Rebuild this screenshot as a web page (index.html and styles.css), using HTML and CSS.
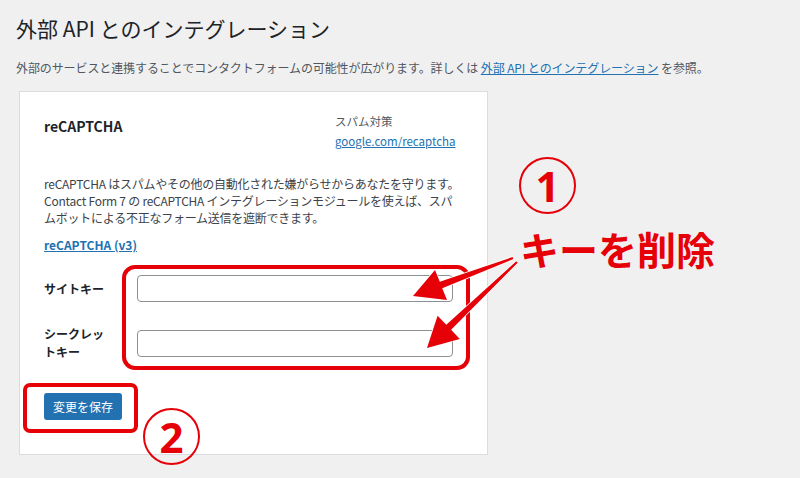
FILE: index.html
```html
<!DOCTYPE html>
<html lang="ja">
<head>
    <meta charset="UTF-8">
    <meta name="viewport" content="width=device-width, initial-scale=1.0">
    <title>外部 API とのインテグレーション</title>
    <link rel="stylesheet" href="styles.css">
</head>
<body>
    <div class="page">
        <h1 class="title">外部 API とのインテグレーション</h1>
        <p class="lead">外部のサービスと連携することでコンタクトフォームの可能性が広がります。詳しくは <a href="#">外部 API とのインテグレーション</a> を参照。</p>

        <div class="card">
            <div class="card-head">
                <h2 class="card-title">reCAPTCHA</h2>
                <div class="card-meta">
                    <span>スパム対策</span>
                    <a href="#">google.com/recaptcha</a>
                </div>
            </div>
            <p class="card-desc">reCAPTCHA はスパムやその他の自動化された嫌がらせからあなたを守ります。<br>Contact Form 7 の reCAPTCHA インテグレーションモジュールを使えば、スパ<br>ムボットによる不正なフォーム送信を遮断できます。</p>
            <p class="card-link"><a href="#">reCAPTCHA (v3)</a></p>
            <div class="keys">
                <label class="key-label" for="sitekey">サイトキー</label>
                <input class="key-input" type="text" id="sitekey">
                <label class="key-label" for="secret">シークレッ<br>トキー</label>
                <input class="key-input" type="text" id="secret">
            </div>
            <button class="save-button">変更を保存</button>
        </div>

        <!-- 注釈 -->
        <div class="notes">
            <div class="mark mark-keys"></div>
            <div class="mark mark-save"></div>
            <div class="num num-one">1</div>
            <div class="num num-two">2</div>
            <div class="note-text">キーを削除</div>
            <svg class="arrows" width="800" height="478" viewBox="0 0 800 478">
                <polygon points="513.4,259 512.6,257 439.8,281.7 435,270 413,296 447,300 442.2,288.3"/>
                <polygon points="517.7,262.7 516.3,261.3 446.3,324.8 437.6,315.7 427,348 459.8,338.9 451.1,329.8"/>
            </svg>
        </div>
    </div>
</body>
</html>
```

FILE: styles.css
```css
body {
    margin: 0;
    padding: 0;
    background: #f0f0f1;
    color: #3c434a;
    font-family: "Noto Sans CJK JP", "Noto Sans", sans-serif;
    font-size: 12px;
}
a {
    color: #2271b1;
    text-decoration: underline;
}
.page {
    position: relative;
    width: 800px;
    height: 478px;
    overflow: hidden;
}
.title {
    margin: 14px 0 0 16px;
    font-size: 21px;
    font-weight: 400;
    line-height: 28px;
    color: #1d2327;
}
.lead {
    margin: 17px 0 0 16px;
    line-height: 18px;
    color: #50575e;
    white-space: nowrap;
    letter-spacing: -0.1px;
}
.card {
    box-sizing: border-box;
    width: 469px;
    margin: 14px 0 0 19px;
    padding: 19px 32px 34px 24px;
    background: #fff;
    border: 1px solid #dcdcde;
}
.card-head {
    display: flex;
    justify-content: space-between;
}
.card-title {
    margin: 5px 0 0;
    font-size: 14px;
    font-weight: 600;
    line-height: 20px;
    color: #1d2327;
}
.card-meta {
    width: 120px;
    display: flex;
    flex-direction: column;
    line-height: 20px;
    font-size: 11.5px;
    color: #50575e;
}
.card-desc {
    margin: 24px 0 0;
    line-height: 17px;
    white-space: nowrap;
    letter-spacing: -0.25px;
}
.card-link {
    margin: 10px 0 0;
    line-height: 17px;
    font-weight: 600;
}
.keys {
    display: grid;
    grid-template-columns: 68px 316px;
    column-gap: 25px;
    row-gap: 23px;
    align-items: center;
    margin-top: 22px;
}
.key-label {
    font-weight: 700;
    line-height: 18px;
    color: #1d2327;
}
.key-input {
    box-sizing: border-box;
    height: 27px;
    margin: 0;
    border: 1px solid #8c8f94;
    border-radius: 4px;
    background: #fff;
}
.save-button {
    display: block;
    margin-top: 32px;
    width: 78px;
    height: 27px;
    padding: 0;
    border: none;
    border-radius: 3px;
    background: #2271b1;
    color: #fff;
    font-family: inherit;
    font-size: 12px;
}

/* 赤い注釈 */
.notes {
    position: absolute;
    top: 0;
    left: 0;
    width: 800px;
    height: 478px;
    pointer-events: none;
    color: #e60008;
}
.mark {
    position: absolute;
    box-sizing: border-box;
    border: 4px solid #e60008;
}
.mark-keys {
    left: 122px;
    top: 265px;
    width: 348px;
    height: 105px;
    border-radius: 13px;
}
.mark-save {
    left: 23px;
    top: 383px;
    width: 115px;
    height: 50px;
    border-radius: 7px;
}
.num {
    position: absolute;
    box-sizing: border-box;
    width: 57px;
    height: 57px;
    border: 2.5px solid #e60008;
    border-radius: 50%;
    display: flex;
    align-items: center;
    justify-content: center;
    font-family: "Noto Sans", sans-serif;
    font-size: 42px;
    font-weight: 700;
    line-height: 1;
}
.num-one {
    left: 519px;
    top: 157px;
}
.num-two {
    left: 143px;
    top: 408px;
}
.note-text {
    position: absolute;
    left: 520px;
    top: 222px;
    font-size: 39px;
    font-weight: 700;
    line-height: 52px;
}
.arrows {
    position: absolute;
    top: 0;
    left: 0;
}
.arrows polygon {
    fill: #e60008;
    stroke: #fff;
    stroke-width: 1.5;
    paint-order: stroke;
    stroke-linejoin: round;
}
```
